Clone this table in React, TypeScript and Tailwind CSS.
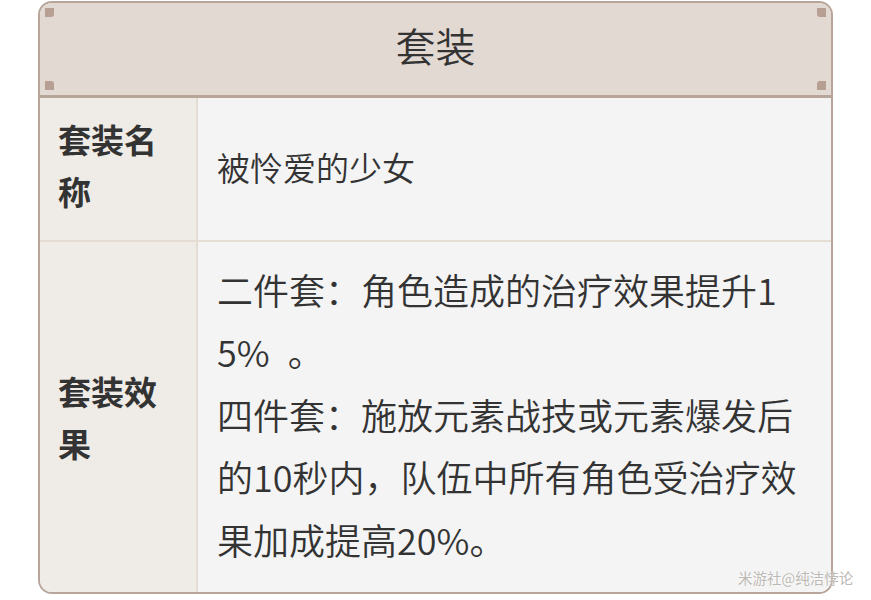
const font = { fontFamily: '"Noto Sans CJK SC", "Noto Sans", sans-serif' }

function Corner({ className }: { className: string }) {
  return <span className={`absolute h-[9px] w-[9px] bg-[#b89f94] ${className}`} />
}

export default function App() {
  return (
    <div className="relative min-h-[600px] bg-white pl-[38px] pt-px" style={font}>
      <div className="w-[795px] overflow-hidden rounded-[14px] border-2 border-[#b7a59a] text-[#333333]">
        <div className="relative flex h-[95px] items-center justify-center border-b-[3px] border-[#b7a59a] bg-[#e2d9d2] pb-2">
          <span className="text-[40px] font-[350] leading-none">套装</span>
          <Corner className="left-[5px] top-[5px] rounded-br-[3px]" />
          <Corner className="bottom-[5px] left-[5px] rounded-tr-[3px]" />
          <Corner className="right-[5px] top-[5px] rounded-bl-[3px]" />
          <Corner className="bottom-[5px] right-[5px] rounded-tl-[3px]" />
        </div>

        <div className="grid grid-cols-[158px_1fr] border-b-2 border-[#e4ddd4]">
          <div className="flex h-[142px] items-center border-r-2 border-[#e4ddd4] bg-[#efebe6] pb-2 pl-[18px] pr-3">
            <span className="text-[33px] font-bold leading-[52px]">套装名称</span>
          </div>
          <div className="flex items-center bg-[#f4f4f4] pb-1 pl-[19px]">
            <span className="text-[33px] font-[350] leading-[52px]">被怜爱的少女</span>
          </div>
        </div>

        <div className="grid grid-cols-[158px_1fr]">
          <div className="flex h-[350px] items-center border-r-2 border-[#e4ddd4] bg-[#efebe6] pl-[18px] pr-3">
            <span className="text-[33px] font-bold leading-[52px]">套装效果</span>
          </div>
          <div className="flex items-center bg-[#f4f4f4] pb-[6px] pl-[19px]">
            <p className="whitespace-nowrap text-[36px] font-[350] leading-[62.5px]">
              二件套：角色造成的治疗效果提升1
              <br />
              5%{'\u2002'}。
              <br />
              四件套：施放元素战技或元素爆发后
              <br />
              的10秒内，队伍中所有角色受治疗效
              <br />
              果加成提高20%。
            </p>
          </div>
        </div>
      </div>

      <span className="absolute left-[738px] top-[568px] text-[14.5px] leading-5 text-[#bdb9b5] [text-shadow:0_0_2px_#fff]">
        米游社@纯洁悖论
      </span>
    </div>
  )
}
